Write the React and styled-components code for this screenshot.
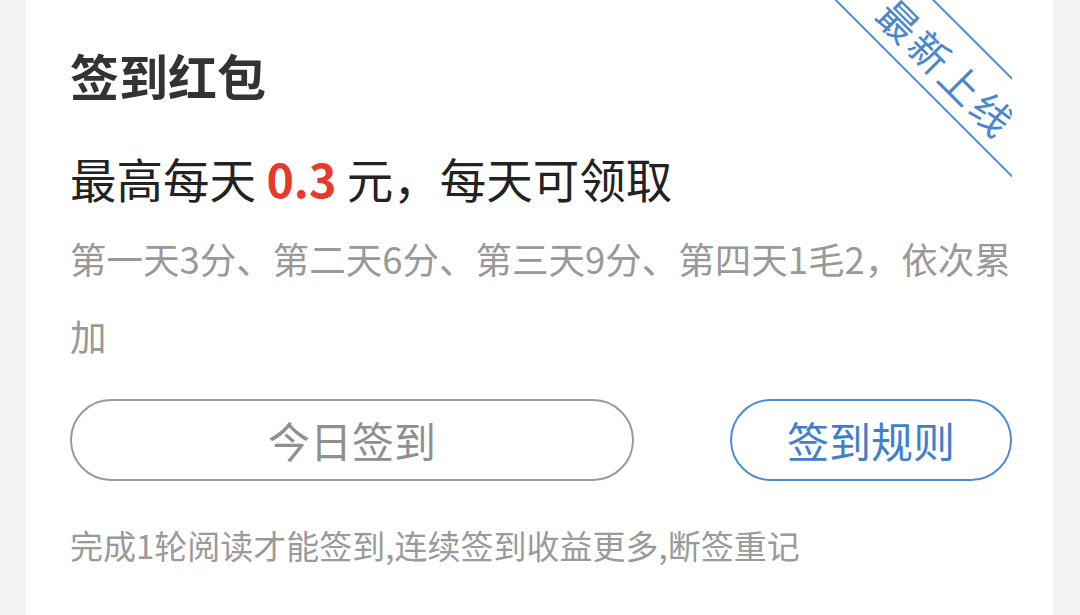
import React from "react";
import styled, { createGlobalStyle } from "styled-components";

const Global = createGlobalStyle`
  html, body { margin: 0; padding: 0; background: #f2f2f2; }
  body { font-family: "Noto Sans CJK SC", "Noto Sans", sans-serif; }
  * { box-sizing: border-box; }
`;

const Page = styled.div`
  height: 615px;
  padding: 0 27px 0 26px;
  overflow: hidden;
`;

const Card = styled.section`
  position: relative;
  height: 100%;
  background: #ffffff;
  padding: 45px 41px 0 44px;
  overflow: hidden;
`;

const Title = styled.h2`
  margin: 0;
  font-size: 49px;
  line-height: 60px;
  font-weight: 700;
  color: #333333;
`;

const Headline = styled.p`
  margin: 43px 0 0;
  font-size: 46.5px;
  line-height: 60px;
  color: #222222;
`;

const Amount = styled.span`
  color: #e8392a;
  font-weight: 700;
`;

const Desc = styled.p`
  margin: 12px 0 0;
  font-size: 36.5px;
  line-height: 77px;
  color: #999999;
`;

const Actions = styled.div`
  display: flex;
  gap: 96px;
  margin-top: 25px;
`;

const Pill = styled.button`
  flex: ${(p) => (p.$wide ? "1 1 auto" : "0 0 282px")};
  height: 82px;
  border-radius: 41px;
  background: #ffffff;
  border: 2px solid ${(p) => (p.$accent ? "#4f8bd2" : "#9a9a9a")};
  color: ${(p) => (p.$accent ? "#3f7fcc" : "#8f8f8f")};
  font-family: "Noto Sans CJK SC", sans-serif;
  font-size: 42px;
  line-height: 1;
  padding: 0;
  cursor: pointer;
`;

const Note = styled.p`
  margin: 44px 0 0;
  font-size: 33px;
  line-height: 40px;
  color: #9a9a9a;
`;

const RibbonClip = styled.div`
  position: absolute;
  top: 0;
  right: 41px;
  width: 200px;
  height: 200px;
  overflow: hidden;
  pointer-events: none;
`;

const Band = styled.div`
  position: absolute;
  left: -62px;
  top: 29.5px;
  width: 400px;
  height: 71px;
  border-top: 2px solid #4f8bd2;
  border-bottom: 2px solid #4f8bd2;
  transform: rotate(45deg);
  display: flex;
  align-items: center;
  justify-content: center;
  padding-top: 6px;
  color: #4a86d0;
  font-size: 40px;
  letter-spacing: 4px;
  white-space: nowrap;
`;

export default function App() {
  return (
    <>
      <Global />
      <Page>
        <Card>
          <RibbonClip>
            <Band>最新上线</Band>
          </RibbonClip>
          <Title>签到红包</Title>
          <Headline>
            最高每天 <Amount>0.3</Amount> 元，每天可领取
          </Headline>
          <Desc>第一天3分、第二天6分、第三天9分、第四天1毛2，依次累加</Desc>
          <Actions>
            <Pill $wide>今日签到</Pill>
            <Pill $accent>签到规则</Pill>
          </Actions>
          <Note>完成1轮阅读才能签到,连续签到收益更多,断签重记</Note>
        </Card>
      </Page>
    </>
  );
}
